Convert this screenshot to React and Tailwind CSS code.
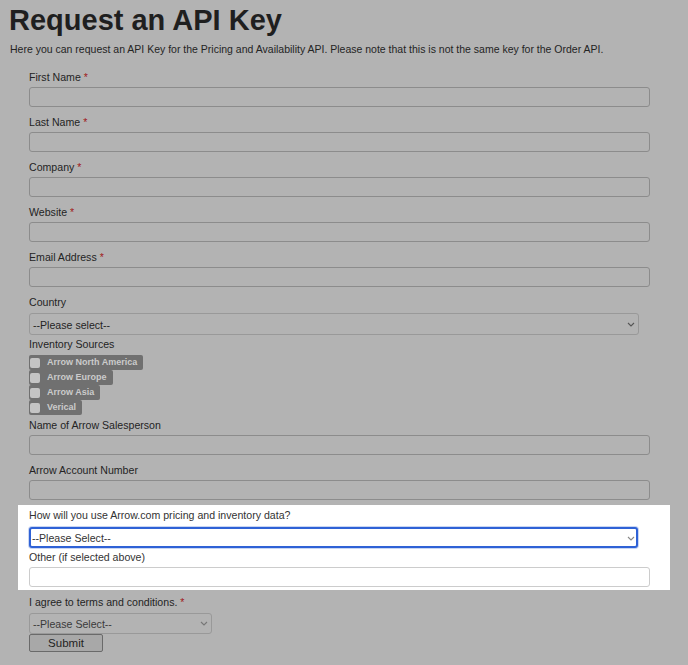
import React from "react";

const font = { fontFamily: '"Liberation Sans", Arial, sans-serif' };

function Label({ children, required, white }) {
  return (
    <label className={`block h-4 text-[10.6px] leading-4 ${white ? "text-[#333]" : "text-[#242424]"}`}>
      {children}
      {required ? <span className={white ? " text-[#d00]" : " text-[#a01818]"}> *</span> : null}
    </label>
  );
}

function Chevron({ className }) {
  return (
    <svg
      className={className}
      width="8"
      height="5"
      viewBox="0 0 8 5"
      fill="none"
      stroke="currentColor"
      strokeWidth="1.1"
    >
      <path d="M1 1l3 3 3-3" />
    </svg>
  );
}

function TextField({ label, required, last }) {
  return (
    <div className={last ? "" : "mb-[7px]"}>
      <Label required={required}>{label}</Label>
      <input
        type="text"
        className="mt-[2px] block h-5 w-[621px] rounded-[3px] border border-[#8c8c8c] bg-[#b3b3b3] outline-none"
      />
    </div>
  );
}

const sources = ["Arrow North America", "Arrow Europe", "Arrow Asia", "Verical"];

export default function App() {
  return (
    <div className="min-h-[665px] w-[688px] bg-[#b3b3b3] pt-[3px]" style={font}>
      <h1 className="ml-[9px] text-[29px] font-bold leading-[34px] text-[#1f1f1f]">
        Request an API Key
      </h1>
      <p className="ml-[10px] mt-[4px] text-[10.5px] leading-4 text-[#242424]">
        Here you can request an API Key for the Pricing and Availability API. Please note that this is not the same key for the Order API.
      </p>

      <form className="mt-[12px]">
        <div className="ml-[29px]">
          <TextField label="First Name" required />
          <TextField label="Last Name" required />
          <TextField label="Company" required />
          <TextField label="Website" required />
          <TextField label="Email Address" required />

          <Label>Country</Label>
          <div className="relative mt-[3px] h-[22px] w-[610px] rounded-[3px] border border-[#999] bg-[#b3b3b3]">
            <span className="absolute left-[3px] top-[3px] text-[10.6px] leading-4 text-[#242424]">
              --Please select--
            </span>
            <Chevron className="absolute right-[3px] top-[8px] text-[#555]" />
          </div>

          <div className="mt-[1px]">
            <Label>Inventory Sources</Label>
          </div>
          <div className="mt-[3px] flex flex-col items-start">
            {sources.map((name) => (
              <div
                key={name}
                className="flex h-[15px] items-center rounded-[2px] bg-[#707070] pr-[6px]"
              >
                <span className="ml-[1px] mr-[7px] h-[10px] w-[10px] rounded-[2px] bg-[#c4c4c4]" />
                <span className="text-[9px] font-bold leading-none text-[#cbcbcb]">{name}</span>
              </div>
            ))}
          </div>

          <div className="mt-[2px]">
            <TextField label="Name of Arrow Salesperson" />
            <TextField label="Arrow Account Number" last />
          </div>
        </div>

        <div className="ml-[18px] mt-[5px] w-[652px] bg-white pb-[3px] pl-[11px] pt-[2px]">
          <Label white>How will you use Arrow.com pricing and inventory data?</Label>
          <div className="relative mt-[4px] h-[21px] w-[609px] rounded-[3px] border-2 border-[#2f62d6] bg-white shadow-[0_0_0_1px_#c9d6f3]">
            <span className="absolute left-[1px] top-[1px] text-[10.6px] leading-4 text-[#333]">
              --Please Select--
            </span>
            <Chevron className="absolute right-[1px] top-[7px] text-[#888]" />
          </div>
          <div className="mt-[1px]">
            <Label white>Other (if selected above)</Label>
            <input
              type="text"
              className="mt-[2px] block h-5 w-[621px] rounded-[3px] border border-[#cccccc] bg-white outline-none"
            />
          </div>
        </div>

        <div className="ml-[29px] mt-[4px]">
          <Label required>I agree to terms and conditions.</Label>
          <div className="relative mt-[3px] h-[21px] w-[183px] rounded-[3px] border border-[#999] bg-[#b3b3b3]">
            <span className="absolute left-[3px] top-[2px] text-[10.6px] leading-4 text-[#3a3a3a]">
              --Please Select--
            </span>
            <Chevron className="absolute right-[3px] top-[7px] text-[#777]" />
          </div>
          <button
            type="button"
            className="block h-[18px] w-[74px] rounded-[2px] border border-[#6a6a6a] bg-[#a8a8a8] text-[11.5px] leading-4 text-[#1f1f1f]"
          >
            Submit
          </button>
        </div>
      </form>
    </div>
  );
}
